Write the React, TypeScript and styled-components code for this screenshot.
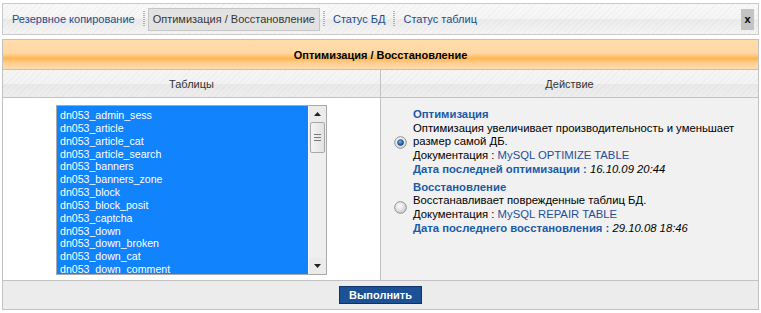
import styled, { createGlobalStyle } from 'styled-components';

const tables = [
  'dn053_admin_sess',
  'dn053_article',
  'dn053_article_cat',
  'dn053_article_search',
  'dn053_banners',
  'dn053_banners_zone',
  'dn053_block',
  'dn053_block_posit',
  'dn053_captcha',
  'dn053_down',
  'dn053_down_broken',
  'dn053_down_cat',
  'dn053_down_comment',
];

const GlobalStyle = createGlobalStyle`
  html, body {
    margin: 0;
    background: #ffffff;
    font-family: "Liberation Sans", Arial, sans-serif;
    font-size: 11px;
  }
`;

function Radio({ checked }: { checked?: boolean }) {
  return (
    <svg width="13" height="13" viewBox="0 0 13 13">
      <defs>
        <radialGradient id={checked ? 'rOn' : 'rOff'} cx="0.4" cy="0.35" r="0.7">
          <stop offset="0" stopColor="#ffffff" />
          <stop offset="1" stopColor={checked ? '#d6d6d6' : '#c9c9c9'} />
        </radialGradient>
        <radialGradient id="dot" cx="0.4" cy="0.35" r="0.7">
          <stop offset="0" stopColor="#6fb4f0" />
          <stop offset="1" stopColor="#0b3f86" />
        </radialGradient>
      </defs>
      <circle cx="6.5" cy="6.5" r="5.8" fill={`url(#${checked ? 'rOn' : 'rOff'})`} stroke="#8f8f8f" strokeWidth="1" />
      {checked && <circle cx="6.5" cy="6.5" r="3" fill="url(#dot)" stroke="#173a66" strokeWidth="0.6" />}
    </svg>
  );
}

export default function App() {
  return (
    <Page>
      <GlobalStyle />
      <Toolbar>
        <Tabs>
          <Tab>Резервное копирование</Tab>
          <Sep />
          <Tab $active>Оптимизация / Восстановление</Tab>
          <Sep />
          <Tab>Статус БД</Tab>
          <Sep />
          <Tab>Статус таблиц</Tab>
        </Tabs>
        <CloseButton>x</CloseButton>
      </Toolbar>

      <Panel>
        <PanelTitle>Оптимизация / Восстановление</PanelTitle>
        <Columns>
          <ColHead $divider>Таблицы</ColHead>
          <ColHead>Действие</ColHead>

          <TablesCell>
            <ListBox>
              <Items>
                {tables.map((t) => (
                  <Item key={t}>{t}</Item>
                ))}
              </Items>
              <Scrollbar>
                <Arrow>
                  <svg width="7" height="4" viewBox="0 0 7 4">
                    <path d="M3.5 0 L7 4 L0 4 Z" fill="#222" />
                  </svg>
                </Arrow>
                <Thumb>
                  <Grip />
                  <Grip />
                  <Grip />
                </Thumb>
                <Track />
                <Arrow>
                  <svg width="7" height="4" viewBox="0 0 7 4">
                    <path d="M0 0 L7 0 L3.5 4 Z" fill="#222" />
                  </svg>
                </Arrow>
              </Scrollbar>
            </ListBox>
          </TablesCell>

          <ActionsCell>
            <Option>
              <Radio checked />
              <OptionText>
                <OptionTitle>Оптимизация</OptionTitle>
                <div>Оптимизация увеличивает производительность и уменьшает размер самой ДБ.</div>
                <div>
                  Документация : <DocLink>MySQL OPTIMIZE TABLE</DocLink>
                </div>
                <div>
                  <DateLabel>Дата последней оптимизации :</DateLabel> <DateValue>16.10.09 20:44</DateValue>
                </div>
              </OptionText>
            </Option>
            <Option>
              <Radio />
              <OptionText>
                <OptionTitle>Восстановление</OptionTitle>
                <div>Восстанавливает поврежденные таблиц БД.</div>
                <div>
                  Документация : <DocLink>MySQL REPAIR TABLE</DocLink>
                </div>
                <div>
                  <DateLabel>Дата последнего восстановления :</DateLabel> <DateValue>29.10.08 18:46</DateValue>
                </div>
              </OptionText>
            </Option>
          </ActionsCell>
        </Columns>
        <Footer>
          <Submit>Выполнить</Submit>
        </Footer>
      </Panel>
    </Page>
  );
}

const stripes = `repeating-linear-gradient(135deg, rgba(0, 0, 0, 0.025) 0 1px, transparent 1px 4px)`;

const Page = styled.div`
  padding: 3px 2px 0 2px;
  width: 757px;
  display: flex;
  flex-direction: column;
  gap: 4px;
`;

const Toolbar = styled.div`
  height: 30px;
  border: 1px solid #c9c9c9;
  display: flex;
  align-items: center;
  justify-content: space-between;
  padding: 0 4px;
  background:
    ${stripes},
    linear-gradient(to bottom, #f8f8f8 0%, #f5f5f5 48%, #ebebeb 52%, #f4f4f4 100%);
`;

const Tabs = styled.div`
  display: flex;
  align-items: center;
`;

const Tab = styled.div<{ $active?: boolean }>`
  height: 21px;
  line-height: 21px;
  padding: 0 4px;
  border: 1px solid ${(p) => (p.$active ? '#c6c6c6' : 'transparent')};
  background: ${(p) => (p.$active ? '#e2e2e2' : 'transparent')};
  color: ${(p) => (p.$active ? '#363636' : '#1a4c8e')};
  white-space: nowrap;
`;

const Sep = styled.div`
  width: 2px;
  height: 16px;
  margin: 0 3px;
  background: repeating-linear-gradient(to bottom, #b2b2b2 0 1px, transparent 1px 2px);
`;

const CloseButton = styled.div`
  width: 13px;
  height: 21px;
  margin-top: 1px;
  line-height: 20px;
  text-align: center;
  background: #c3c3c3;
  color: #000;
  font-weight: bold;
  font-size: 11px;
`;

const Panel = styled.div`
  border: 1px solid #c2c2c2;
  display: flex;
  flex-direction: column;
`;

const PanelTitle = styled.div`
  height: 29px;
  line-height: 30px;
  text-align: center;
  font-weight: bold;
  color: #000;
  border-bottom: 1px solid #c2c2c2;
  background: linear-gradient(
    to bottom,
    #ffdcab 0%,
    #ffd8a4 45%,
    #ffc06a 58%,
    #ffb655 64%,
    #ffcf93 80%,
    #ffdcad 100%
  );
`;

const Columns = styled.div`
  display: grid;
  grid-template-columns: 378px 1fr;
`;

const ColHead = styled.div<{ $divider?: boolean }>`
  height: 27px;
  line-height: 29px;
  text-align: center;
  color: #333;
  border-bottom: 1px solid #c2c2c2;
  border-right: ${(p) => (p.$divider ? '1px solid #c2c2c2' : 'none')};
  background:
    ${stripes},
    linear-gradient(to bottom, #f5f5f5 0%, #f3f3f3 50%, #e9e9e9 52%, #eeeeee 100%);
`;

const TablesCell = styled.div`
  height: 182px;
  background: #ffffff;
  border-right: 1px solid #c2c2c2;
  display: flex;
  justify-content: center;
  padding-top: 7px;
  box-sizing: border-box;
`;

const ListBox = styled.div`
  width: 271px;
  height: 170px;
  box-sizing: border-box;
  border: 1px solid #a9a9a9;
  display: flex;
  background: #1183fd;
`;

const Items = styled.div`
  flex: 1;
  overflow: hidden;
  padding: 3px 0 0 3px;
`;

const Item = styled.div`
  color: #ffffff;
  font-size: 10.6px;
  line-height: 12.85px;
  white-space: nowrap;
`;

const Scrollbar = styled.div`
  width: 17px;
  background: #eeeeee;
  border-left: 1px solid #f6f6f6;
  display: flex;
  flex-direction: column;
`;

const Arrow = styled.div`
  height: 16px;
  display: flex;
  align-items: center;
  justify-content: center;
  background: #ebebeb;
`;

const Thumb = styled.div`
  height: 29px;
  margin: 0 1px;
  border: 1px solid #a8a8a8;
  border-radius: 2px;
  background: linear-gradient(to right, #f4f4f4, #e2e2e2);
  display: flex;
  flex-direction: column;
  align-items: center;
  justify-content: center;
  gap: 2px;
`;

const Grip = styled.div`
  width: 7px;
  height: 1px;
  background: #7a7a7a;
`;

const Track = styled.div`
  flex: 1;
  background: #efefef;
`;

const ActionsCell = styled.div`
  height: 182px;
  background: #f1f1f1;
  padding: 10px 10px 0 13px;
  box-sizing: border-box;
  display: flex;
  flex-direction: column;
  gap: 4px;
`;

const Option = styled.div`
  display: flex;
  align-items: center;
  gap: 6px;
`;

const OptionText = styled.div`
  flex: 1;
  font-size: 11.3px;
  line-height: 13.7px;
  color: #000;
`;

const OptionTitle = styled.div`
  font-weight: bold;
  color: #1a5aa6;
`;

const DocLink = styled.span`
  color: #1f4f9c;
`;

const DateLabel = styled.span`
  font-weight: bold;
  color: #1a5aa6;
`;

const DateValue = styled.span`
  font-style: italic;
`;

const Footer = styled.div`
  height: 28px;
  border-top: 1px solid #c2c2c2;
  background: #ececec;
  display: flex;
  align-items: center;
  justify-content: center;
`;

const Submit = styled.div`
  width: 83px;
  height: 18px;
  box-sizing: border-box;
  line-height: 16px;
  text-align: center;
  background: #1c5195;
  border: 1px solid #0d3469;
  color: #ffffff;
  font-weight: bold;
`;
